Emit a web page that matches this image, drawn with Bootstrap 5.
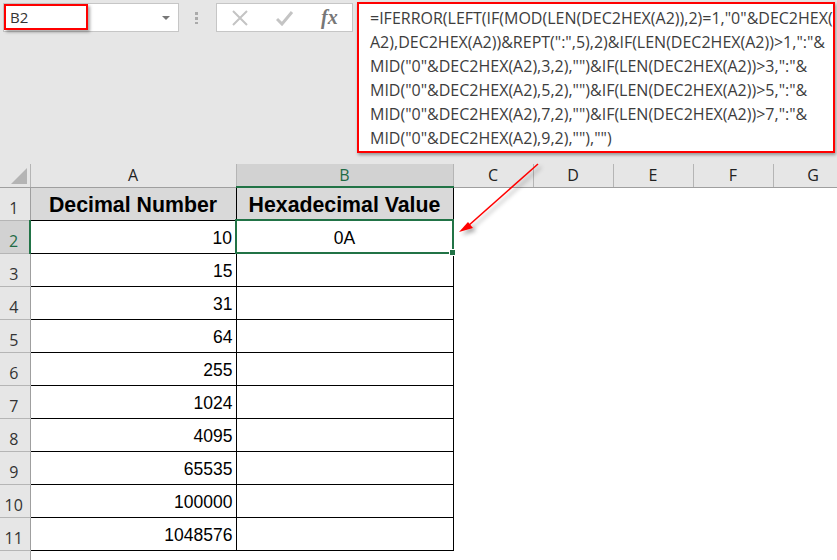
<!DOCTYPE html>
<html lang="en">
<head>
  <meta charset="UTF-8" />
  <meta name="viewport" content="width=device-width, initial-scale=1" />
  <title>Decimal to Hexadecimal</title>
  <link rel="stylesheet" href="https://cdn.jsdelivr.net/npm/bootstrap@5.3.0/dist/css/bootstrap.min.css" />
  <style>
    body { background: #fff; width: 837px; height: 560px; overflow: hidden; position: relative; }

    /* Formula bar */
    .formula-area { background: #e6e6e6; height: 164px; padding: 2px 2px 0 3px; }
    .name-box { width: 176px; height: 29px; margin-top: 1px; background: #fff; border: 1px solid #c6c6c6; }
    .name-red { width: 84px; height: 26px; margin-top: -1px; border: 2px solid #f00; box-shadow: 2px 2px 3px rgba(0,0,0,.35);
      font: 15px "Open Sans", sans-serif; color: #333; padding-left: 4px; line-height: 22px; }
    .caret-down { width: 0; height: 0; border-left: 4px solid transparent; border-right: 4px solid transparent; border-top: 4px solid #777; margin-right: 8px; }
    .grip { width: 3px; height: 12px; margin: 10px 18px 0 16px; background: repeating-linear-gradient(#aaa 0 3px, transparent 3px 5px); }
    .fx-buttons { width: 137px; height: 29px; margin-top: 1px; margin-right: 4px; padding-left: 15px; gap: 28px; background: #fff; border: 1px solid #c6c6c6; }
    .fx-label { font: italic 700 20px "Liberation Serif", serif; color: #777; margin-left: -1px; }
    .formula-box { width: 478px; height: 151px; background: #fff; border: 2px solid #f00; box-shadow: 1px 2px 3px rgba(0,0,0,.35);
      font: 16px/24px "Open Sans", sans-serif; color: #3d3d3d; padding: 2px 0 0 11px; white-space: nowrap; overflow: hidden; }

    /* Worksheet */
    .sheet { table-layout: fixed; border-collapse: collapse; width: 853px; max-width: none; font-family: "Liberation Sans", sans-serif; color: #000; }
    .sheet td, .sheet th { padding: 0; }
    .col-row { height: 23px; background: #e6e6e6; }
    .col-row th { font: 400 16px "Open Sans", sans-serif; color: #222; text-align: center; border-right: 1px solid #b5b5b5; border-bottom: 1px solid #9f9f9f; vertical-align: middle; }
    .col-row th.on { background: #d2d2d2; color: #1f6b45; border-bottom: 2px solid #217346; border-right-color: #b5b5b5; }
    .col-row th.corner { position: relative; }
    .corner-mark { position: absolute; right: 3px; bottom: 3px; width: 0; height: 0; border-left: 16px solid transparent; border-bottom: 16px solid #b4b4b4; }
    .row-head { background: #e6e6e6; font: 400 16px "Open Sans", sans-serif; color: #333; text-align: center; vertical-align: bottom; border-right: 1px solid #9f9f9f; border-bottom: 1px solid #b5b5b5; line-height: 23px; padding-right: 2px !important; }
    .row-head.on { background: #d2d2d2; color: #1f6b45; border-right: 2px solid #217346; }
    .sheet tbody tr { height: 33px; }
    .cell { border: 1px solid #000; text-align: right; font-size: 17.5px; line-height: 1; padding-top: 4px !important; padding-right: 3px !important; }
    .cell-head { background: #d9d9d9; font-weight: 700; font-size: 21.3px; text-align: center; padding-right: 0 !important; }
    .cell-blank { border: 0; }
    .cell-active { position: relative; border: 2px solid #217346; text-align: center; font-size: 17.5px; padding-right: 0 !important; }
    .fill-handle { position: absolute; right: -4px; bottom: -4px; background: #217346; border: 1px solid #fff; box-sizing: content-box; width: 5px; height: 5px; }
    .annot-arrow { position: absolute; left: 0; top: 0; pointer-events: none; }
  </style>
</head>
<body>
  <!-- formula bar -->
  <div class="formula-area d-flex align-items-start">
    <div class="name-box d-flex align-items-center justify-content-between">
      <div class="name-red">B2</div>
      <div class="caret-down"></div>
    </div>
    <div class="grip"></div>
    <div class="fx-buttons d-flex align-items-center">
      <svg width="16" height="16" viewBox="0 0 16 16"><path d="M1 1 L15 15 M15 1 L1 15" stroke="#c4c4c4" stroke-width="2" fill="none"/></svg>
      <svg width="18" height="16" viewBox="0 0 18 16"><path d="M1 9 L6 14 L16 2" stroke="#c4c4c4" stroke-width="3" fill="none"/></svg>
      <span class="fx-label">fx</span>
    </div>
    <div class="formula-box">=IFERROR(LEFT(IF(MOD(LEN(DEC2HEX(A2)),2)=1,"0"&amp;DEC2HEX(<br>A2),DEC2HEX(A2))&amp;REPT(":",5),2)&amp;IF(LEN(DEC2HEX(A2))&gt;1,":"&amp;<br>MID("0"&amp;DEC2HEX(A2),3,2),"")&amp;IF(LEN(DEC2HEX(A2))&gt;3,":"&amp;<br>MID("0"&amp;DEC2HEX(A2),5,2),"")&amp;IF(LEN(DEC2HEX(A2))&gt;5,":"&amp;<br>MID("0"&amp;DEC2HEX(A2),7,2),"")&amp;IF(LEN(DEC2HEX(A2))&gt;7,":"&amp;<br>MID("0"&amp;DEC2HEX(A2),9,2),""),"")</div>
  </div>

  <!-- worksheet -->
  <table class="sheet">
    <colgroup>
      <col style="width:30px"><col style="width:206px"><col style="width:217px">
      <col style="width:80px"><col style="width:80px"><col style="width:80px"><col style="width:80px"><col style="width:80px">
    </colgroup>
    <thead>
      <tr class="col-row">
        <th class="corner"><span class="corner-mark"></span></th>
        <th>A</th><th class="on">B</th><th>C</th><th>D</th><th>E</th><th>F</th><th>G</th>
      </tr>
    </thead>
    <tbody id="rows"></tbody>
  </table>

  <!-- annotation arrow -->
  <svg class="annot-arrow" width="837" height="560">
    <defs><filter id="sh" x="-20%" y="-20%" width="150%" height="150%"><feDropShadow dx="3" dy="3" stdDeviation="2" flood-color="#000" flood-opacity=".35"/></filter></defs>
    <g filter="url(#sh)">
      <path d="M538 164 L468 226" stroke="#f00" stroke-width="1.6" fill="none"/>
      <path d="M459 232 L468 222 L473 228 Z" fill="#f00"/>
    </g>
  </svg>

  <script>
    // Rows of the sheet: decimal values from column A
    const values = [10, 15, 31, 64, 255, 1024, 4095, 65535, 100000, 1048576];
    const tbody = document.getElementById("rows");
    let html = '<tr><td class="row-head">1</td><td class="cell cell-head">Decimal Number</td><td class="cell cell-head">Hexadecimal Value</td><td class="cell-blank" colspan="5"></td></tr>';
    values.forEach((v, i) => {
      const r = i + 2;
      const b = r === 2 ? '<td class="cell cell-active">0A<span class="fill-handle"></span></td>' : '<td class="cell"></td>';
      html += `<tr><td class="row-head${r === 2 ? " on" : ""}">${r}</td><td class="cell">${v}</td>${b}<td class="cell-blank" colspan="5"></td></tr>`;
    });
    // row 12 is cut off by the window, only its header shows
    html += '<tr><td class="row-head"></td><td colspan="7"></td></tr>';
    tbody.innerHTML = html;
  </script>
  <script src="https://cdn.jsdelivr.net/npm/bootstrap@5.3.0/dist/js/bootstrap.bundle.min.js"></script>
</body>
</html>
